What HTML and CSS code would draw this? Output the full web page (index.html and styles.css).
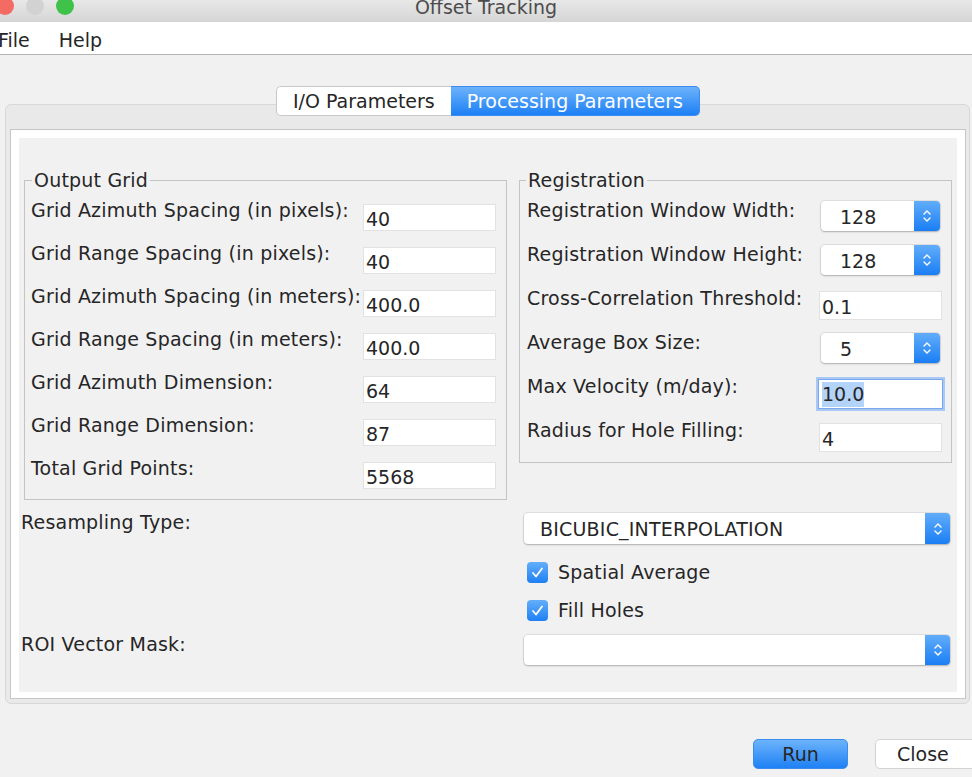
FILE: index.html
```html
<!DOCTYPE html>
<html lang="en">
<head>
    <meta charset="UTF-8">
    <title>Offset Tracking</title>
    <link rel="stylesheet" href="styles.css">
</head>
<body>
    <div class="titlebar">
        <div class="lights">
            <span class="light red"></span>
            <span class="light idle"></span>
            <span class="light green"></span>
        </div>
        <div class="title">Offset Tracking</div>
        <div></div>
    </div>

    <div class="menubar">
        <span class="menu-item first">File</span>
        <span class="menu-item">Help</span>
    </div>

    <div class="content">
        <div class="tabpane">
            <div class="tabs">
                <div class="tab">I/O Parameters</div>
                <div class="tab active">Processing Parameters</div>
            </div>

            <div class="panel">
                <div class="panel-inner">
                    <div class="groups">
                        <!-- left group -->
                        <fieldset class="group grid-group">
                            <legend>Output Grid</legend>
                            <div class="row-label">Grid Azimuth Spacing (in pixels):</div>
                            <div class="field">40</div>
                            <div class="row-label">Grid Range Spacing (in pixels):</div>
                            <div class="field">40</div>
                            <div class="row-label">Grid Azimuth Spacing (in meters):</div>
                            <div class="field">400.0</div>
                            <div class="row-label">Grid Range Spacing (in meters):</div>
                            <div class="field">400.0</div>
                            <div class="row-label">Grid Azimuth Dimension:</div>
                            <div class="field">64</div>
                            <div class="row-label">Grid Range Dimension:</div>
                            <div class="field">87</div>
                            <div class="row-label">Total Grid Points:</div>
                            <div class="field">5568</div>
                        </fieldset>

                        <!-- right group -->
                        <fieldset class="group reg-group">
                            <legend>Registration</legend>
                            <div class="row-label">Registration Window Width:</div>
                            <div class="combo small">
                                <span class="combo-value">128</span>
                                <span class="combo-btn"><svg width="10" height="16" viewBox="0 0 10 16"><path d="M2 6 L5 3 L8 6 M2 10 L5 13 L8 10" fill="none" stroke="#fff" stroke-width="1.4" stroke-linecap="round" stroke-linejoin="round"/></svg></span>
                            </div>
                            <div class="row-label">Registration Window Height:</div>
                            <div class="combo small">
                                <span class="combo-value">128</span>
                                <span class="combo-btn"><svg width="10" height="16" viewBox="0 0 10 16"><path d="M2 6 L5 3 L8 6 M2 10 L5 13 L8 10" fill="none" stroke="#fff" stroke-width="1.4" stroke-linecap="round" stroke-linejoin="round"/></svg></span>
                            </div>
                            <div class="row-label">Cross-Correlation Threshold:</div>
                            <div class="field reg-field">0.1</div>
                            <div class="row-label">Average Box Size:</div>
                            <div class="combo small">
                                <span class="combo-value">5</span>
                                <span class="combo-btn"><svg width="10" height="16" viewBox="0 0 10 16"><path d="M2 6 L5 3 L8 6 M2 10 L5 13 L8 10" fill="none" stroke="#fff" stroke-width="1.4" stroke-linecap="round" stroke-linejoin="round"/></svg></span>
                            </div>
                            <div class="row-label">Max Velocity (m/day):</div>
                            <div class="field reg-field focused"><span class="selection">10.0</span></div>
                            <div class="row-label">Radius for Hole Filling:</div>
                            <div class="field reg-field">4</div>
                        </fieldset>
                    </div>

                    <div class="lower">
                        <div class="lrow">
                            <div class="row-label">Resampling Type:</div>
                            <div class="combo wide">
                                <span class="combo-value">BICUBIC_INTERPOLATION</span>
                                <span class="combo-btn"><svg width="10" height="16" viewBox="0 0 10 16"><path d="M2 6 L5 3 L8 6 M2 10 L5 13 L8 10" fill="none" stroke="#fff" stroke-width="1.4" stroke-linecap="round" stroke-linejoin="round"/></svg></span>
                            </div>
                        </div>
                        <div class="lrow check-row first-check">
                            <div></div>
                            <label class="check">
                                <span class="check-box"><svg width="21" height="21" viewBox="0 0 21 21"><path d="M6 11 L9 14.5 L15 6.5" fill="none" stroke="#fff" stroke-width="1.8" stroke-linecap="round" stroke-linejoin="round"/></svg></span>
                                Spatial Average
                            </label>
                        </div>
                        <div class="lrow check-row">
                            <div></div>
                            <label class="check">
                                <span class="check-box"><svg width="21" height="21" viewBox="0 0 21 21"><path d="M6 11 L9 14.5 L15 6.5" fill="none" stroke="#fff" stroke-width="1.8" stroke-linecap="round" stroke-linejoin="round"/></svg></span>
                                Fill Holes
                            </label>
                        </div>
                        <div class="lrow roi-row">
                            <div class="row-label">ROI Vector Mask:</div>
                            <div class="combo wide roi">
                                <span class="combo-value"></span>
                                <span class="combo-btn"><svg width="10" height="16" viewBox="0 0 10 16"><path d="M2 6 L5 3 L8 6 M2 10 L5 13 L8 10" fill="none" stroke="#fff" stroke-width="1.4" stroke-linecap="round" stroke-linejoin="round"/></svg></span>
                            </div>
                        </div>
                    </div>
                </div>
            </div>
        </div>

        <div class="actions">
            <button class="btn btn-run">Run</button>
            <button class="btn btn-close">Close</button>
        </div>
    </div>
</body>
</html>
```

FILE: styles.css
```css
body {
    margin: 0;
    background-color: #f1f1f1;
    font-family: "DejaVu Sans", "Liberation Sans", sans-serif;
    font-size: 19px;
    color: #262626;
    overflow: hidden;
}

/* window chrome */
.titlebar {
    height: 22px;
    display: grid;
    grid-template-columns: 1fr auto 1fr;
    background: linear-gradient(#e8e8e8, #d5d5d5);
    overflow: hidden;
}
.lights {
    display: flex;
    gap: 12px;
    margin: -3px 0 0 -4px;
}
.light {
    width: 18px;
    height: 18px;
    border-radius: 50%;
}
.light.red {
    background-color: #f46b63;
}
.light.idle {
    background-color: #d2d2d2;
}
.light.green {
    background-color: #3ec24a;
}
.title {
    line-height: 22px;
    margin-top: -4px;
    color: #4c4c4c;
}

.menubar {
    height: 33px;
    box-sizing: border-box;
    display: flex;
    gap: 29px;
    padding-top: 4px;
    line-height: 28px;
    background-color: #fff;
    border-bottom: 1px solid #b4b4b4;
}
.menu-item.first {
    margin-left: -2px;
}

.content {
    padding: 49px 2px 0 5px;
}

/* tabbed pane */
.tabpane {
    background-color: #e9e9e9;
    border: 1px solid #d8d8d8;
    border-radius: 6px;
    padding: 0 3px 4px 4px;
}
.tabs {
    display: flex;
    justify-content: center;
    margin-top: -19px;
}
.tab {
    height: 30px;
    box-sizing: border-box;
    line-height: 28px;
    padding: 0 16px;
    background-color: #fff;
    border: 1px solid #c9c9c9;
    border-right: none;
    border-radius: 5px 0 0 5px;
}
.tab.active {
    background: linear-gradient(#6cb2fb, #1d80f5);
    border: 1px solid #3b8cf0;
    border-left: none;
    border-radius: 0 5px 5px 0;
    color: #fff;
}

.panel {
    margin-top: 13px;
    border: 1px solid #c6c6c6;
    background-color: #fff;
    padding: 8px 8px 6px 8px;
}
.panel-inner {
    background-color: #f2f1f2;
    height: 554px;
    box-sizing: border-box;
    padding: 32px 5px 0 5px;
}

.groups {
    display: grid;
    grid-template-columns: 483px 433px;
    column-gap: 12px;
    align-items: start;
}
.group {
    margin: 0;
    min-width: 0;
    border: 1px solid #c4c4c4;
    display: grid;
}
.group legend {
    padding: 0 2px;
    line-height: 20px;
    letter-spacing: 0.2px;
}
.grid-group {
    padding: 8px 10px 0 6px;
    grid-template-columns: 1fr 133px;
    grid-auto-rows: 43px;
}
.grid-group legend {
    margin-left: 1px;
}
.reg-group {
    padding: 8px 8px 0 7px;
    grid-template-columns: 1fr 125px;
    grid-auto-rows: 44px;
}
.reg-group legend {
    margin-left: -1px;
}

.row-label {
    line-height: 24px;
    white-space: nowrap;
    letter-spacing: 0.2px;
}

/* text fields */
.field {
    height: 27px;
    box-sizing: border-box;
    margin-top: 6px;
    padding: 2px 0 0 2px;
    line-height: 24px;
    background-color: #fff;
    border: 1px solid #e2e2e2;
}
.reg-field {
    width: 123px;
    height: 29px;
    margin: 5px 0 0 1px;
    padding-top: 3px;
}
.field.focused {
    width: 125px;
    height: 30px;
    margin-left: 0;
    padding: 2px 0 0 3px;
    border-color: #7aa8ee;
    box-shadow: 0 0 0 2px #a9c8f4;
}
.selection {
    display: inline-block;
    vertical-align: top;
    height: 25px;
    line-height: 25px;
    background-color: #b4d3f9;
}

/* combo boxes */
.combo {
    display: flex;
    background-color: #fff;
    border-radius: 4px;
    box-shadow: 0 0 0 1px rgba(0, 0, 0, 0.07), 0 1px 2px rgba(0, 0, 0, 0.22);
}
.combo.small {
    width: 119px;
    height: 30px;
    margin: 3px 0 0 3px;
}
.combo.wide {
    height: 31px;
    margin-top: 3px;
}
.combo.roi {
    height: 30px;
}
.combo-value {
    flex: 1;
    padding: 3px 0 0 19px;
    line-height: 26px;
}
.combo.wide .combo-value {
    padding-left: 16px;
    letter-spacing: 0.2px;
}
.combo-btn {
    width: 26px;
    display: flex;
    align-items: center;
    justify-content: center;
    background: linear-gradient(#62adfa, #1a7ef4);
    border-radius: 0 4px 4px 0;
}
.combo.wide .combo-btn {
    width: 25px;
}

/* lower rows */
.lower {
    margin: 10px 0 0 -3px;
    display: flex;
    flex-direction: column;
}
.lrow {
    display: grid;
    grid-template-columns: 503px 426px;
    align-items: start;
}
.check-row {
    margin-top: 14px;
}
.check-row.first-check {
    margin-top: 16px;
}
.roi-row {
    margin-top: 10px;
}
.check {
    display: flex;
    align-items: center;
    gap: 10px;
    height: 24px;
    margin-left: 3px;
    letter-spacing: 0.2px;
}
.check-box {
    width: 21px;
    height: 21px;
    border-radius: 4px;
    background: linear-gradient(#63aefa, #1f80f3);
}
.check-box svg {
    display: block;
}

/* dialog buttons */
.actions {
    display: flex;
    justify-content: flex-end;
    gap: 27px;
    margin: 35px -10px 0 0;
}
.btn {
    height: 30px;
    font-family: inherit;
    font-size: 19px;
    color: #262626;
    border-radius: 5px;
    padding: 0;
}
.btn-run {
    width: 95px;
    background: linear-gradient(#6cb3fb, #1f81f4);
    border: 1px solid #3a8cef;
}
.btn-close {
    width: 105px;
    text-align: left;
    padding-left: 21px;
    background-color: #fff;
    border: 1px solid #d2d2d2;
}
```
